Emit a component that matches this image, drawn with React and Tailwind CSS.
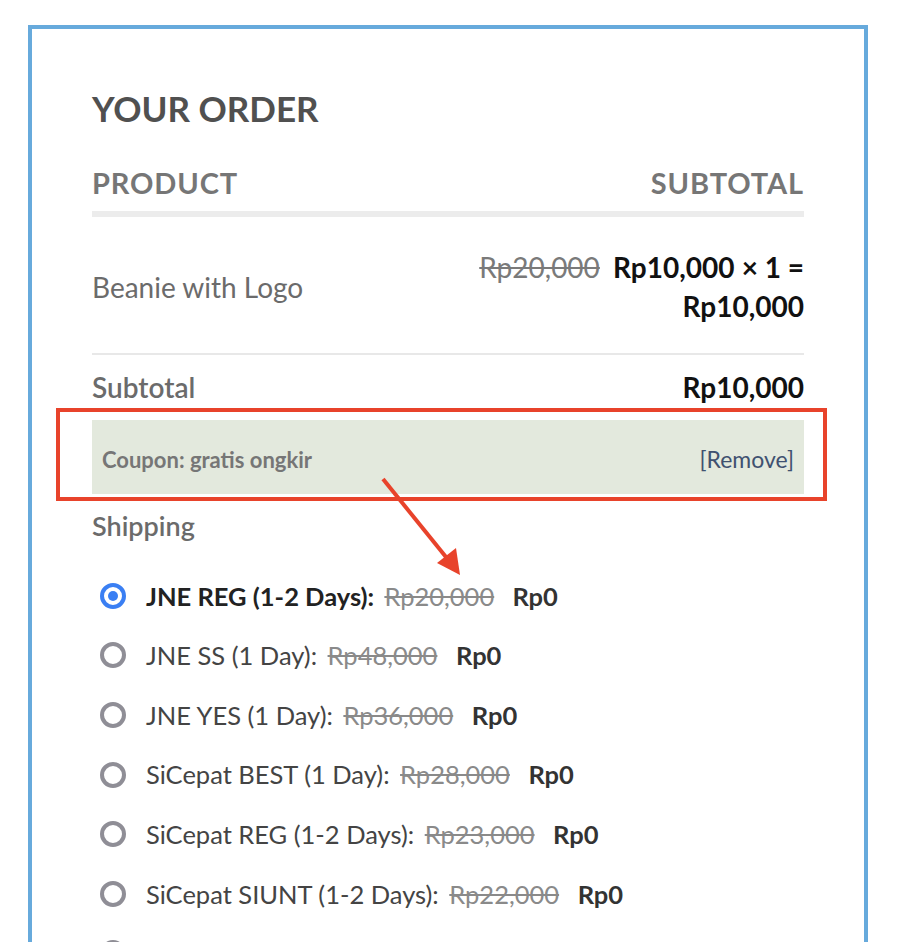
import React from 'react';

const rates = [
  { label: 'JNE REG (1-2 Days):', old: 'Rp20,000', selected: true },
  { label: 'JNE SS (1 Day):', old: 'Rp48,000' },
  { label: 'JNE YES (1 Day):', old: 'Rp36,000' },
  { label: 'SiCepat BEST (1 Day):', old: 'Rp28,000' },
  { label: 'SiCepat REG (1-2 Days):', old: 'Rp23,000' },
  { label: 'SiCepat SIUNT (1-2 Days):', old: 'Rp22,000' },
  { label: 'SiCepat HALU (2-3 Days):', old: 'Rp9,000' },
];

function Radio({ checked }) {
  if (checked) {
    return (
      <span className="w-[26px] h-[26px] rounded-full border-[4px] border-[#3a7ff3] flex items-center justify-center shrink-0">
        <span className="w-[10px] h-[10px] rounded-full bg-[#3a7ff3]" />
      </span>
    );
  }
  return <span className="w-[26px] h-[26px] rounded-full border-[4px] border-[#8f8e96] shrink-0" />;
}

export default function App() {
  return (
    <div className="relative min-h-screen bg-white pt-[25px] pl-[28px] font-['Lato','Liberation_Sans',sans-serif]">
      {/* order box */}
      <div className="w-[840px] border-[4px] border-b-0 border-[#67aadc] px-[60px] pt-[58px] pb-[40px]">
        <h2 className="text-[35px] leading-[42px] font-bold text-[#505050] uppercase">Your Order</h2>

        <div className="mt-[36px] flex justify-between text-[29px] leading-[35px] font-bold text-[#767676] tracking-[0.03em] uppercase">
          <span>Product</span>
          <span>Subtotal</span>
        </div>
        <div className="mt-[11px] h-[6px] bg-[#ececec]" />

        <div className="flex items-center justify-between pt-[31px] pb-[27px] border-b-2 border-[#e8e8e8]">
          <span className="text-[28px] leading-[39px] text-[#6b6b6b]">Beanie with Logo</span>
          <div className="text-right text-[28px] leading-[39px] text-[#111]">
            <div>
              <del className="text-[#7a7a7a]">Rp20,000</del>{' '}
              <span className="ml-[6px] font-bold">Rp10,000</span> <span className="font-bold">× 1 =</span>
            </div>
            <div className="font-bold">Rp10,000</div>
          </div>
        </div>

        <div className="mt-[13px] flex justify-between text-[28px] leading-[39px]">
          <span className="font-semibold text-[#6b6b6b]">Subtotal</span>
          <span className="font-bold text-[#111]">Rp10,000</span>
        </div>

        <div className="mt-[13px] h-[74px] bg-[#e3e9dd] flex items-center justify-between px-[10px] pt-[4px] text-[22px]">
          <span className="font-bold text-[#767676]">Coupon: gratis ongkir</span>
          <span className="text-[#3f5170] text-[23px]">[Remove]</span>
        </div>

        <div className="mt-[12px] text-[27px] leading-[39px] font-semibold text-[#6b6b6b]">Shipping</div>

        <ul className="mt-[21px] flex flex-col">
          {rates.map((r) => (
            <li key={r.label} className="h-[59.6px] flex items-center pl-[8px] gap-[20px] text-[25.5px]">
              <Radio checked={r.selected} />
              <span className={r.selected ? 'font-bold text-[#222]' : 'text-[#444]'}>
                {r.label}{' '}
                <del className="ml-[4px] font-normal text-[#8a8a8a]">{r.old}</del>{' '}
                <span className="ml-[12px] font-bold text-[#333]">Rp0</span>
              </span>
            </li>
          ))}
        </ul>
      </div>

      {/* annotation: highlight box */}
      <div className="absolute left-[56px] top-[408px] w-[771px] h-[93px] border-[4px] border-[#e8432b] pointer-events-none" />

      {/* annotation: arrow */}
      <svg className="absolute left-0 top-0 pointer-events-none" width="908" height="942" viewBox="0 0 908 942">
        <line x1="383" y1="479" x2="450" y2="562" stroke="#e8432b" strokeWidth="4" />
        <polygon points="460,575 437,563 456,548" fill="#e8432b" />
      </svg>
    </div>
  );
}
